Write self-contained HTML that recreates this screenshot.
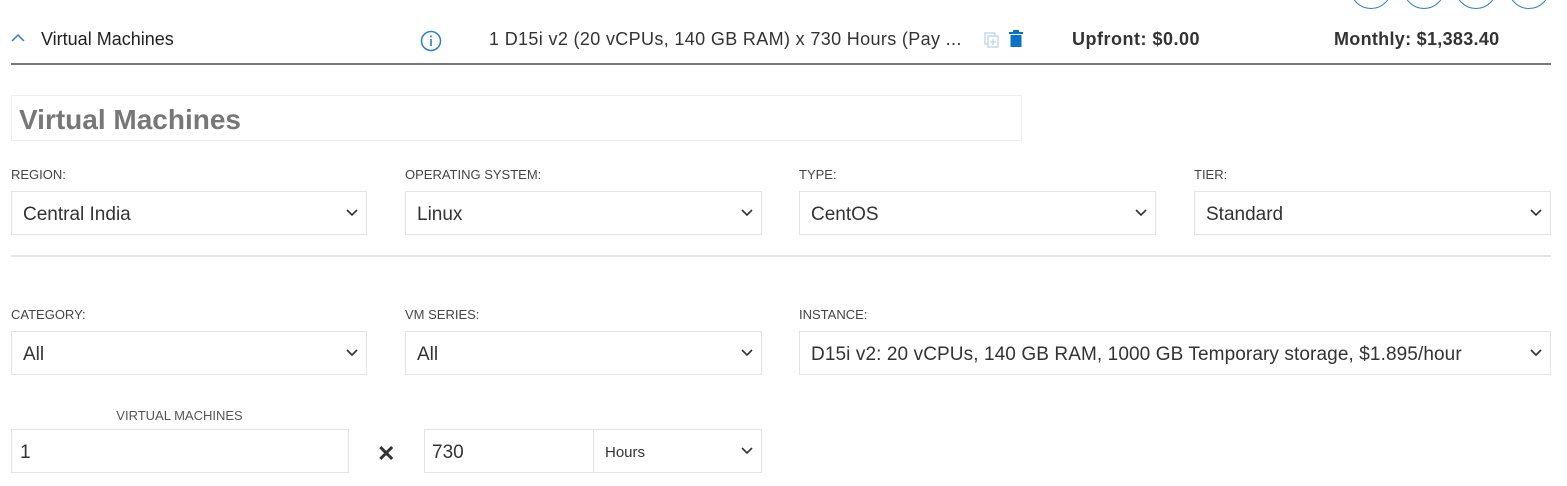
<!DOCTYPE html><html><head><style>
body{margin:0;width:1567px;height:486px;background:#fff;font-family:"Liberation Sans",sans-serif;position:relative;overflow:hidden;color:#333}
.a{position:absolute;white-space:nowrap}
.lbl{font-size:13px;color:#444}
.box{position:absolute;border:1px solid #e3e3e3;box-sizing:border-box;height:44px;font-size:19px;color:#333;line-height:46px;padding-left:11px}
.chev{position:absolute;right:8px;top:16px}
.circ{position:absolute;width:40px;height:40px;border:1.5px solid #2a7fcf;border-radius:50%;top:-33px}
</style></head><body>
<div class="circ" style="left:1350px"></div><div class="circ" style="left:1403px"></div><div class="circ" style="left:1455px"></div><div class="circ" style="left:1508px"></div>
<svg class="a" style="left:11px;top:33px" width="14" height="10"><path d="M1 8 L7 2 L13 8" stroke="#2a7fcf" stroke-width="1.5" fill="none"/></svg>
<div class="a" style="left:41px;top:29px;font-size:18px;color:#222">Virtual Machines</div>
<svg class="a" style="left:420px;top:30px" width="22" height="22"><circle cx="11" cy="11" r="9.5" stroke="#2a7fcf" stroke-width="1.5" fill="none"/><rect x="10.2" y="9" width="1.6" height="7" fill="#2a7fcf"/><rect x="10.2" y="5.5" width="1.6" height="1.8" fill="#2a7fcf"/></svg>
<div class="a" style="left:489px;top:29px;font-size:18px;color:#333;letter-spacing:0.35px">1 D15i v2 (20 vCPUs, 140 GB RAM) x 730 Hours (Pay ...</div>
<svg class="a" style="left:983px;top:31px" width="18" height="18"><rect x="2" y="2" width="10" height="11" fill="none" stroke="#b8d4ee" stroke-width="1.3"/><rect x="5" y="5" width="10" height="11" fill="#fff" stroke="#b8d4ee" stroke-width="1.3"/><path d="M10 8v6M7 11h6" stroke="#b8d4ee" stroke-width="1.3"/></svg>
<svg class="a" style="left:1008px;top:29px" width="16" height="20"><rect x="1" y="3" width="14" height="2" fill="#0a72c9"/><rect x="5" y="1" width="6" height="2" fill="#0a72c9"/><rect x="2.5" y="6" width="11" height="12" fill="#0a72c9"/></svg>
<div class="a" style="left:1072px;top:29px;font-size:18px;font-weight:bold;color:#333;letter-spacing:0.5px">Upfront: $0.00</div>
<div class="a" style="left:1334px;top:29px;font-size:18px;font-weight:bold;color:#333;letter-spacing:0.3px">Monthly: $1,383.40</div>
<div class="a" style="left:11px;top:63px;width:1540px;height:2px;background:#777"></div>
<div class="a" style="left:11px;top:95px;width:1011px;height:46px;border:1px solid #eee;box-sizing:border-box"></div>
<div class="a" style="left:19px;top:104px;font-size:28px;font-weight:bold;color:#777">Virtual Machines</div>
<div class="a lbl" style="left:11px;top:167px">REGION:</div>
<div class="a lbl" style="left:405px;top:167px">OPERATING SYSTEM:</div>
<div class="a lbl" style="left:799px;top:167px">TYPE:</div>
<div class="a lbl" style="left:1194px;top:167px">TIER:</div>
<div class="box" style="left:11px;top:191px;width:356px">Central India<svg class="chev" width="12" height="10"><path d="M1 2l5 5 5-5" stroke="#333" stroke-width="1.6" fill="none"/></svg></div>
<div class="box" style="left:405px;top:191px;width:357px">Linux<svg class="chev" width="12" height="10"><path d="M1 2l5 5 5-5" stroke="#333" stroke-width="1.6" fill="none"/></svg></div>
<div class="box" style="left:799px;top:191px;width:357px">CentOS<svg class="chev" width="12" height="10"><path d="M1 2l5 5 5-5" stroke="#333" stroke-width="1.6" fill="none"/></svg></div>
<div class="box" style="left:1194px;top:191px;width:357px">Standard<svg class="chev" width="12" height="10"><path d="M1 2l5 5 5-5" stroke="#333" stroke-width="1.6" fill="none"/></svg></div>
<div class="a" style="left:11px;top:255px;width:1540px;height:2px;background:#e6e6e6"></div>
<div class="a lbl" style="left:11px;top:307px">CATEGORY:</div>
<div class="a lbl" style="left:405px;top:307px">VM SERIES:</div>
<div class="a lbl" style="left:799px;top:307px">INSTANCE:</div>
<div class="box" style="left:11px;top:331px;width:356px">All<svg class="chev" width="12" height="10"><path d="M1 2l5 5 5-5" stroke="#333" stroke-width="1.6" fill="none"/></svg></div>
<div class="box" style="left:405px;top:331px;width:357px">All<svg class="chev" width="12" height="10"><path d="M1 2l5 5 5-5" stroke="#333" stroke-width="1.6" fill="none"/></svg></div>
<div class="box" style="left:799px;top:331px;width:752px;letter-spacing:0.1px">D15i v2: 20 vCPUs, 140 GB RAM, 1000 GB Temporary storage, $1.895/hour<svg class="chev" width="12" height="10"><path d="M1 2l5 5 5-5" stroke="#333" stroke-width="1.6" fill="none"/></svg></div>
<div class="a lbl" style="left:11px;width:337px;text-align:center;top:408px;color:#555">VIRTUAL MACHINES</div>
<div class="box" style="left:11px;top:429px;width:338px;padding-left:8px">1</div>
<div class="a" style="left:377px;top:443px;font-size:22px;font-weight:bold;color:#333;line-height:22px">✕</div>
<div class="box" style="left:424px;top:429px;width:170px;padding-left:7px">730</div>
<div class="box" style="left:593px;top:429px;width:169px;font-size:15px">Hours<svg class="chev" width="12" height="10"><path d="M1 2l5 5 5-5" stroke="#333" stroke-width="1.6" fill="none"/></svg></div>
</body></html>
